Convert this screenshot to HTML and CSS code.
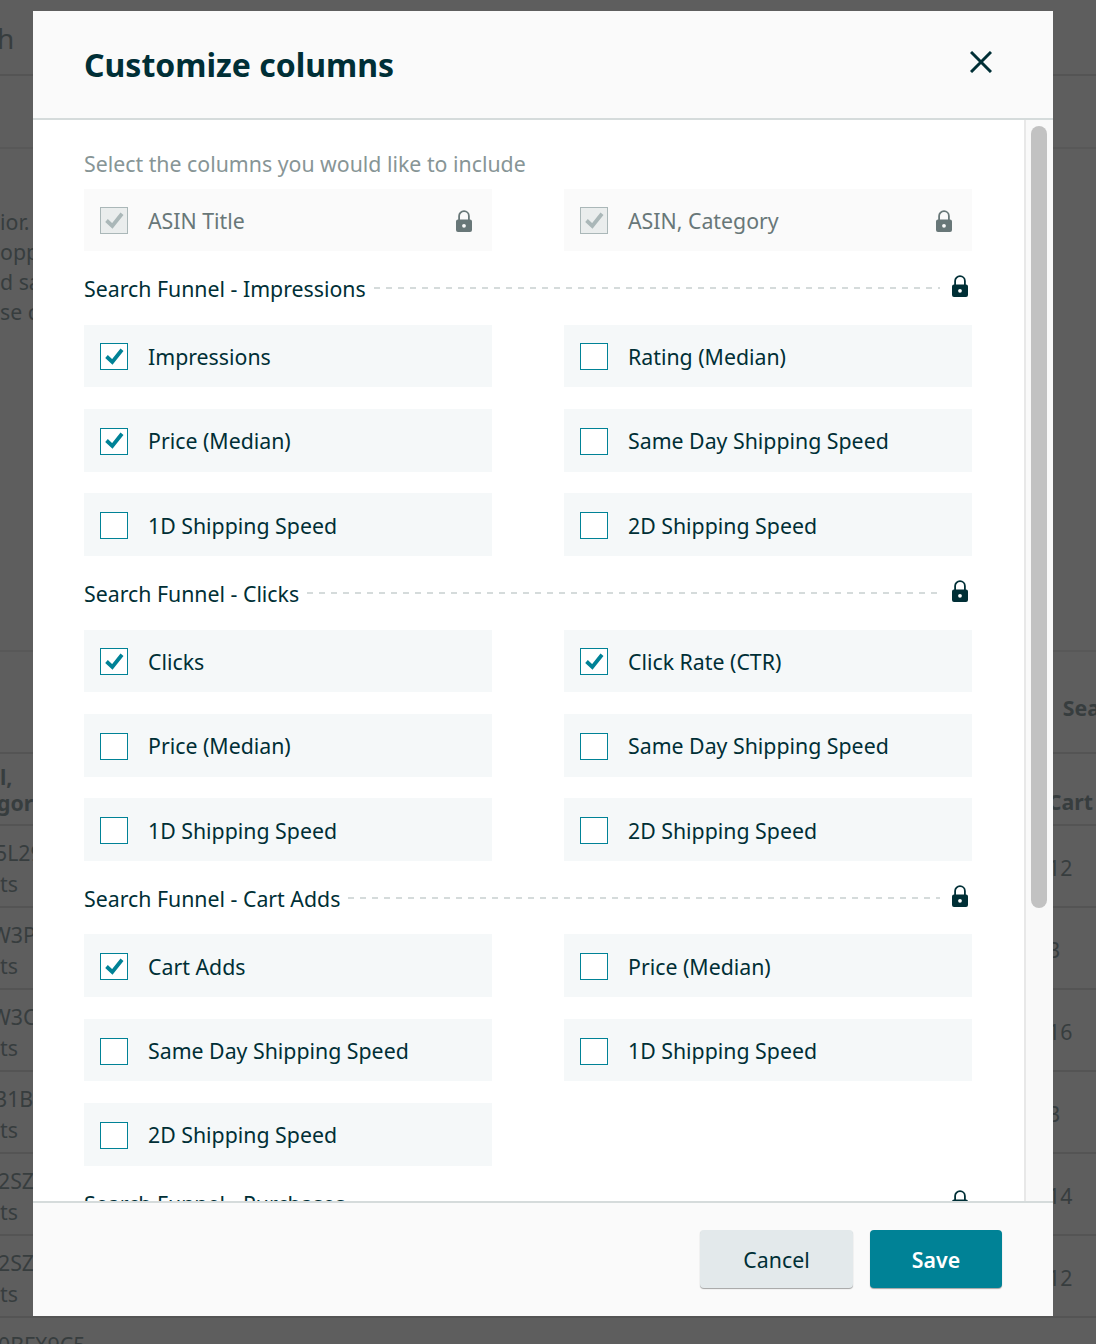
FILE: index.html
```html
<!DOCTYPE html>
<html lang="en">
<head>
    <meta charset="UTF-8">
    <meta name="viewport" content="width=device-width, initial-scale=1.0">
    <title>Customize columns</title>
    <link rel="stylesheet" href="styles.css">
</head>
<body>
    <svg class="defs" aria-hidden="true">
        <symbol id="lock" viewBox="0 0 16 22">
            <path fill="currentColor" fill-rule="evenodd" d="M2 9.5h12a2 2 0 0 1 2 2V20a2 2 0 0 1-2 2H2a2 2 0 0 1-2-2v-8.500a2 2 0 0 1 2-2zM8 13.900a1.900 1.900 0 1 0 0 3.800 1.900 1.900 0 0 0 0-3.800z"/>
            <path fill="none" stroke="currentColor" stroke-width="1.800" d="M3.100 10V6a4.900 4.900 0 0 1 9.800 0v4"/>
        </symbol>
        <symbol id="check" viewBox="0 0 28 28">
            <path fill="none" stroke="currentColor" stroke-width="3.800" d="M6.500 13.500l5.800 5.400L22 6.700"/>
        </symbol>
    </svg>

    <!-- page behind the dialog -->
    <div class="page">
        <div class="page-top"><span class="page-title">h</span></div>
        <div class="page-band"></div>
        <div class="page-intro">
            <p>ior.</p>
            <p>opp</p>
            <p>d sa</p>
            <p>se c</p>
        </div>
        <div class="page-row head-top"><span></span><b>Sea</b></div>
        <div class="page-row head-low"><b>l,<br><span class="code-gor">gor</span></b><b class="cart">Cart</b></div>
        <div class="page-row"><span><span class="code a">5L29</span><br>ts</span><span class="num">12</span></div>
        <div class="page-row"><span><span class="code b">W3P</span><br>ts</span><span class="num">3</span></div>
        <div class="page-row"><span><span class="code b">W3C</span><br>ts</span><span class="num">16</span></div>
        <div class="page-row"><span><span class="code a">31B</span><br>ts</span><span class="num">3</span></div>
        <div class="page-row"><span><span class="code c">2SZ0</span><br>ts</span><span class="num">14</span></div>
        <div class="page-row"><span><span class="code c">2SZI</span><br>ts</span><span class="num">12</span></div>
        <div class="page-row"><span class="code c">0BFX9C5</span></div>
    </div>

    <div class="overlay">
        <div class="modal">
            <div class="modal-header">
                <h2>Customize columns</h2>
                <button class="close" aria-label="Close">
                    <svg viewBox="0 0 22 22" width="22" height="22"><path fill="none" stroke="currentColor" stroke-width="3" d="M1 1l20 20M21 1L1 21"/></svg>
                </button>
            </div>

            <div class="modal-body">
                <p class="intro">Select the columns you would like to include</p>
                <div class="items">
                    <label class="item disabled">
                        <span class="box"><svg><use href="#check"/></svg></span>ASIN Title
                        <svg class="lock"><use href="#lock"/></svg>
                    </label>
                    <label class="item disabled">
                        <span class="box"><svg><use href="#check"/></svg></span>ASIN, Category
                        <svg class="lock"><use href="#lock"/></svg>
                    </label>
                </div>

                <div class="section-head">
                    <span>Search Funnel - Impressions</span>
                    <i class="dashes"></i>
                    <svg class="lock"><use href="#lock"/></svg>
                </div>
                <div class="items">
                    <label class="item"><span class="box"><svg><use href="#check"/></svg></span>Impressions</label>
                    <label class="item"><span class="box"></span>Rating (Median)</label>
                    <label class="item"><span class="box"><svg><use href="#check"/></svg></span>Price (Median)</label>
                    <label class="item"><span class="box"></span>Same Day Shipping Speed</label>
                    <label class="item"><span class="box"></span>1D Shipping Speed</label>
                    <label class="item"><span class="box"></span>2D Shipping Speed</label>
                </div>

                <div class="section-head">
                    <span>Search Funnel - Clicks</span>
                    <i class="dashes"></i>
                    <svg class="lock"><use href="#lock"/></svg>
                </div>
                <div class="items">
                    <label class="item"><span class="box"><svg><use href="#check"/></svg></span>Clicks</label>
                    <label class="item"><span class="box"><svg><use href="#check"/></svg></span>Click Rate (CTR)</label>
                    <label class="item"><span class="box"></span>Price (Median)</label>
                    <label class="item"><span class="box"></span>Same Day Shipping Speed</label>
                    <label class="item"><span class="box"></span>1D Shipping Speed</label>
                    <label class="item"><span class="box"></span>2D Shipping Speed</label>
                </div>

                <div class="section-head">
                    <span>Search Funnel - Cart Adds</span>
                    <i class="dashes"></i>
                    <svg class="lock"><use href="#lock"/></svg>
                </div>
                <div class="items">
                    <label class="item"><span class="box"><svg><use href="#check"/></svg></span>Cart Adds</label>
                    <label class="item"><span class="box"></span>Price (Median)</label>
                    <label class="item"><span class="box"></span>Same Day Shipping Speed</label>
                    <label class="item"><span class="box"></span>1D Shipping Speed</label>
                    <label class="item"><span class="box"></span>2D Shipping Speed</label>
                </div>

                <div class="section-head">
                    <span>Search Funnel - Purchases</span>
                    <i class="dashes"></i>
                    <svg class="lock"><use href="#lock"/></svg>
                </div>

                <div class="scrollbar"><div class="scrollbar-thumb"></div></div>
            </div>

            <div class="modal-footer">
                <button class="btn btn-cancel">Cancel</button>
                <button class="btn btn-save">Save</button>
            </div>
        </div>
    </div>
</body>
</html>
```

FILE: styles.css
```css
* {
    margin: 0;
    padding: 0;
    box-sizing: border-box;
    font-family: "Noto Sans", "Open Sans", sans-serif;
}

body {
    width: 1096px;
    height: 1344px;
    overflow: hidden;
    background-color: #5e5e5e;
    color: #002f36;
}

.defs {
    display: none;
}

/* dimmed page */
.page {
    height: 1344px;
    overflow: hidden;
    color: #373d3e;
    font-size: 21.3px;
    line-height: 31px;
    white-space: nowrap;
}

.page-top {
    height: 76px;
    border-bottom: 2px solid #545454;
    padding-top: 10px;
}

.page-title {
    font-size: 28px;
    line-height: 56px;
    margin-left: -3px;
}

.page-band {
    height: 73px;
    border-bottom: 2px solid #585858;
}

.page-intro {
    height: 503px;
    padding-top: 58px;
    border-bottom: 2px solid #585858;
}

.page-intro p {
    line-height: 30px;
}

.page-row {
    display: flex;
    justify-content: space-between;
    height: 82px;
    padding: 11px 0 0 0;
    border-bottom: 2px solid #545454;
}

.page-row b {
    font-weight: 700;
}

.head-top {
    height: 102px;
    padding-top: 40px;
    margin-right: -4px;
}

.head-low {
    height: 72px;
    padding-top: 10px;
    line-height: 26px;
}

.cart {
    margin-top: 25px;
    margin-right: 3px;
}

.code {
    display: inline-block;
}

.code.a {
    margin-left: -5px;
}

.code.b {
    margin-left: -9px;
}

.code.c {
    margin-left: -2px;
}

.code-gor {
    margin-left: -3px;
}

.num {
    width: 48px;
    margin-top: 15px;
}

/* dialog */
.overlay {
    position: fixed;
    inset: 0;
    padding: 11px 43px 28px 33px;
    display: flex;
}

.modal {
    width: 100%;
    display: flex;
    flex-direction: column;
    background: #ffffff;
}

.modal-header {
    flex: none;
    height: 109px;
    padding: 0 61px 2px 51px;
    display: flex;
    align-items: center;
    justify-content: space-between;
    background: #fafafa;
    border-bottom: 2px solid #d5dbdb;
}

h2 {
    margin-top: 2px;
    font-size: 32px;
    font-weight: 700;
    color: #002f36;
}

.close {
    display: flex;
    margin-bottom: 3px;
    border: none;
    background: none;
    color: #002f36;
}

.modal-body {
    position: relative;
    flex: 1;
    min-height: 0;
    padding: 29px 81px 0 51px;
    overflow: hidden;
}

.scrollbar {
    position: absolute;
    top: 0;
    right: 0;
    bottom: 0;
    width: 29px;
    padding: 6px 6px 0 5px;
    background: #f9f9f9;
    border-left: 2px solid #e8e8e8;
}

.scrollbar-thumb {
    height: 782px;
    background: #c2c2c2;
    border-radius: 8px;
}

.intro {
    margin-bottom: 9.6px;
    font-size: 21.3px;
    line-height: 30px;
    color: #879596;
}

.items {
    display: grid;
    grid-template-columns: 408px 408px;
    grid-auto-rows: 62.6px;
    gap: 21.8px 72px;
}

.item {
    display: flex;
    align-items: center;
    padding: 0.9px 20px 0 16px;
    background: #f5f8f9;
    font-size: 21.3px;
}

.box {
    flex: none;
    width: 28px;
    height: 27px;
    margin: 1.1px 20px 0 0;
    background: #ffffff;
    border: 1.4px solid #008296;
    color: #008296;
}

.box svg {
    display: block;
    width: 28px;
    height: 28px;
    margin: -1.4px;
}

.item.disabled {
    background: #fafafa;
    color: #687778;
}

.disabled .box {
    background: #eaeded;
    border-color: #aab7b8;
    color: #aab7b8;
}

.lock {
    flex: none;
    width: 16px;
    height: 22px;
}

.item .lock {
    margin-left: auto;
    margin-top: 1.1px;
}

.section-head {
    display: flex;
    align-items: center;
    height: 73.5px;
    padding-top: 2px;
    font-size: 21.3px;
    white-space: nowrap;
}

.dashes {
    flex: 1;
    height: 2px;
    margin: -2px 12px 0 8px;
    background: repeating-linear-gradient(90deg, #d5dbdb 0 6px, transparent 6px 12px);
}

.section-head .lock {
    margin-right: 4px;
    margin-top: -6px;
}

.modal-footer {
    flex: none;
    height: 115px;
    padding: 27px 51px 28px 0;
    display: flex;
    justify-content: flex-end;
    gap: 17px;
    background: #fafafa;
    border-top: 2px solid #d5dbdb;
}

.btn {
    height: 58px;
    border: none;
    border-radius: 4px;
    font-size: 21.3px;
    box-shadow: 0 1px 1px rgba(0, 0, 0, 0.35);
}

.btn-cancel {
    width: 153px;
    background: #e3e9eb;
    color: #002f36;
}

.btn-save {
    width: 132px;
    background: #008296;
    color: #ffffff;
    font-weight: 600;
}
```
